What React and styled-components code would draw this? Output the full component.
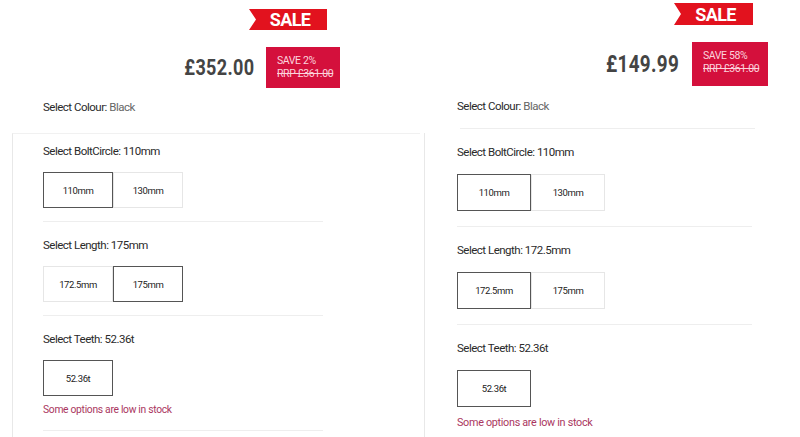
import React from 'react';
import styled, { createGlobalStyle } from 'styled-components';

const GlobalStyle = createGlobalStyle`
    html, body {
        margin: 0;
        padding: 0;
        background: #fff;
    }
    body {
        font-family: 'Roboto', 'Liberation Sans', sans-serif;
        color: #333;
    }
`;

const Page = styled.div`
    width: 800px;
    height: 437px;
    overflow: hidden;
    display: grid;
    grid-template-columns: 420px 380px;
`;

const Column = styled.div`
    display: flex;
    flex-direction: column;
    padding-top: ${props => props.$top}px;
`;

const Header = styled.div`
    display: flex;
    flex-direction: column;
    align-items: flex-end;
    padding-right: ${props => props.$right}px;
`;

const SaleFlag = styled.div`
    width: ${props => props.$w}px;
    height: ${props => props.$h}px;
    margin-right: ${props => props.$offset}px;
    background: #e2121e;
    clip-path: polygon(0 0, 100% 0, 100% 100%, 0 100%, 7px 50%);
    color: #fff;
    font-weight: bold;
    font-size: 18px;
    letter-spacing: -0.6px;
    display: flex;
    align-items: center;
    justify-content: center;
    padding-left: 4px;
    box-sizing: border-box;
`;

const PriceRow = styled.div`
    display: flex;
    align-items: center;
    gap: ${props => props.$gap}px;
    margin-top: 17px;
`;

const Price = styled.div`
    font-size: ${props => props.$size}px;
    font-weight: bold;
    color: #444;
    letter-spacing: 0.4px;
    transform: scaleX(0.82);
    transform-origin: right center;
`;

const SaveBox = styled.div`
    width: ${props => props.$w}px;
    height: ${props => props.$h}px;
    box-sizing: border-box;
    background: #d4103c;
    color: #fbd3dc;
    font-size: 10.5px;
    letter-spacing: -0.4px;
    padding: 7px 0 0 11px;
    line-height: 13px;

    s {
        display: block;
    }
`;

const ColourLabel = styled.div`
    font-size: 11.5px;
    letter-spacing: -0.5px;
    line-height: 14px;
    color: #2a2a2a;
    margin: ${props => props.$gap}px 0 0 ${props => props.$left}px;

    span {
        color: #666;
    }
`;

const Rule = styled.div`
    height: 1px;
    background: #eee;
    width: ${props => props.$w}px;
    margin-left: ${props => props.$left}px;
    margin-top: 15px;
`;

const Card = styled.div`
    margin-top: ${props => props.$gap}px;
    margin-left: ${props => props.$left}px;
    border-left: 1px solid #e8e8e8;
    border-top: ${props => props.$topLine ? '1px solid #f1f1f1' : 'none'};
    padding-left: ${props => props.$inset}px;
    padding-top: ${props => props.$padTop}px;
    flex: 1;
`;

const Section = styled.div`
    padding-top: ${props => props.$first ? 0 : props.$top}px;
    padding-bottom: ${props => props.$bottom}px;
    border-bottom: 1px solid #eee;
    width: ${props => props.$w}px;
`;

const Label = styled.div`
    font-size: 11.5px;
    letter-spacing: -0.5px;
    line-height: 14px;
    color: #2a2a2a;
    margin-bottom: ${props => props.$space}px;
`;

const Options = styled.div`
    display: flex;
`;

const Option = styled.div`
    width: ${props => props.$w}px;
    height: ${props => props.$h}px;
    box-sizing: border-box;
    border: 1px solid ${props => props.$active ? '#555' : '#e6e6e6'};
    display: flex;
    align-items: center;
    justify-content: center;
    font-size: 9.5px;
    letter-spacing: -0.4px;
    color: #222;
`;

const LowStock = styled.div`
    color: #aa3660;
    font-size: ${props => props.$size}px;
    letter-spacing: -0.3px;
    line-height: 14px;
    margin-top: ${props => props.$gap}px;
`;

const Panel = ({ cfg, price, save, bolt, length, teeth }) => {
    const sections = [
        { name: 'BoltCircle', value: bolt, options: ['110mm', '130mm'] },
        { name: 'Length', value: length, options: ['172.5mm', '175mm'] },
        { name: 'Teeth', value: teeth, options: ['52.36t'], low: true },
    ];

    return (
        <Column $top={cfg.top}>
            <Header $right={cfg.right}>
                <SaleFlag $w={cfg.flagW} $h={cfg.flagH} $offset={cfg.flagOffset}>SALE</SaleFlag>
                <PriceRow $gap={cfg.priceGap}>
                    <Price $size={cfg.priceSize}>{price}</Price>
                    <SaveBox $w={cfg.saveW} $h={cfg.saveH}>
                        SAVE {save}
                        <s>RRP £361.00</s>
                    </SaveBox>
                </PriceRow>
            </Header>
            <ColourLabel $gap={cfg.colourGap} $left={cfg.contentLeft}>
                Select Colour: <span>Black</span>
            </ColourLabel>
            {cfg.colourRule && <Rule $w={cfg.ruleW} $left={cfg.contentLeft + 3} />}
            <Card $gap={cfg.cardGap} $left={cfg.cardLeft} $inset={cfg.contentLeft - cfg.cardLeft - 1} $padTop={cfg.cardPad} $topLine={!cfg.colourRule}>
                {sections.map((sec, i) => (
                    <Section key={sec.name} $first={i === 0} $top={cfg.secTop} $bottom={cfg.secBottom} $w={cfg.ruleW}>
                        <Label $space={cfg.labelGap}>Select {sec.name}: {sec.value}</Label>
                        <Options>
                            {sec.options.map(opt => (
                                <Option key={opt} $w={cfg.btnW} $h={cfg.btnH} $active={opt === sec.value}>{opt}</Option>
                            ))}
                        </Options>
                        {sec.low && <LowStock $size={cfg.lowSize} $gap={cfg.lowGap}>Some options are low in stock</LowStock>}
                    </Section>
                ))}
            </Card>
        </Column>
    );
};

const left = {
    top: 9, right: 80, flagW: 78, flagH: 21, flagOffset: 13, priceSize: 22, priceGap: 12,
    saveW: 74, saveH: 41, colourGap: 12, contentLeft: 43, colourRule: false,
    cardGap: 19, cardLeft: 12, cardPad: 10, labelGap: 14, secTop: 16, secBottom: 13,
    ruleW: 280, btnW: 70, btnH: 36, lowSize: 10.3, lowGap: 7,
};

const right = {
    top: 3, right: 32, flagW: 79, flagH: 22, flagOffset: 15, priceSize: 23, priceGap: 13,
    saveW: 76, saveH: 44, colourGap: 13, contentLeft: 37, colourRule: true,
    cardGap: 4, cardLeft: 4, cardPad: 12, labelGap: 15, secTop: 16, secBottom: 15,
    ruleW: 295, btnW: 74, btnH: 37, lowSize: 10.8, lowGap: 9,
};

const App = () => (
    <>
        <GlobalStyle />
        <Page>
            <Panel cfg={left} price="£352.00" save="2%" bolt="110mm" length="175mm" teeth="52.36t" />
            <Panel cfg={right} price="£149.99" save="58%" bolt="110mm" length="172.5mm" teeth="52.36t" />
        </Page>
    </>
);

export default App;
